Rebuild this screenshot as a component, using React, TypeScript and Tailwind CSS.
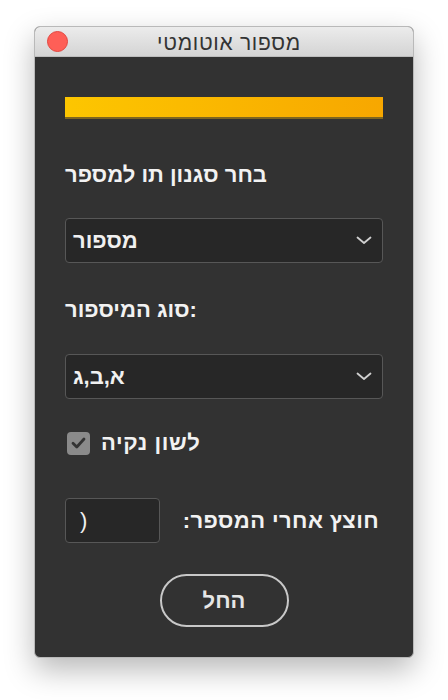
import React from "react";

const font = { fontFamily: '"Liberation Sans", Arial, sans-serif' };

function Chevron() {
  return (
    <svg width="16" height="9" viewBox="0 0 16 9" className="shrink-0">
      <path d="M1.5 1.5 L8 7 L14.5 1.5" fill="none" stroke="#d0d0d0" strokeWidth="1.8" strokeLinecap="round" strokeLinejoin="round" />
    </svg>
  );
}

function Select({ value }: { value: string }) {
  return (
    <div className="flex h-[45px] w-full items-center justify-between rounded-[4px] border border-[#575757] bg-[#272727] pl-[7px] pr-[10px]">
      <span className="text-[22px] font-semibold leading-[26px] text-[#f0f0f0]">{value}</span>
      <Chevron />
    </div>
  );
}

export default function App() {
  return (
    <div className="min-h-[700px] w-[448px] bg-white pl-[34px] pt-[26px]" style={font}>
      <div className="flex h-[632px] w-[380px] flex-col overflow-hidden rounded-[6px] border border-[#b9b9b9] bg-[#323232] shadow-[0_12px_30px_rgba(0,0,0,0.28)]">
        <div className="relative flex h-[30px] shrink-0 items-center justify-center border-b border-[#bdbdbd] bg-gradient-to-b from-[#ececec] to-[#d4d4d4] pl-[10px] pt-[2px]">
          <div className="absolute left-[12px] top-[4px] h-[21px] w-[21px] rounded-full border border-[#e2463f] bg-[#fe5f57]" />
          <span className="text-[21px] leading-[24px] tracking-[0.7px] text-[#333333]">מספור אוטומטי</span>
        </div>
        <div className="flex flex-col px-[30px]">
          <div className="mt-[40px] h-[22px] border-b-2 border-[#7d6520] bg-gradient-to-r from-[#fdc600] to-[#f7a700]" />
          <div className="mt-[43px] text-[22px] font-semibold leading-[26px] text-[#f2f2f2]">בחר סגנון תו למספר</div>
          <div className="mt-[30px]">
            <Select value="מספור" />
          </div>
          <div className="mt-[34px] text-[22px] font-semibold leading-[26px] text-[#f2f2f2]">סוג המיספור:</div>
          <div className="mt-[31px]">
            <Select value="א,ב,ג" />
          </div>
          <div className="mt-[31px] flex items-center gap-[11px] pl-[2px]">
            <div className="flex h-[23px] w-[23px] items-center justify-center rounded-[4px] bg-[#8a8a8a]">
              <svg width="15" height="12" viewBox="0 0 15 12">
                <path d="M2 6.2 L5.8 10 L13 2" fill="none" stroke="#333333" strokeWidth="2.8" strokeLinecap="round" strokeLinejoin="round" />
              </svg>
            </div>
            <span className="tracking-[0.6px] text-[22px] font-semibold leading-[26px] text-[#f2f2f2]">לשון נקיה</span>
          </div>
          <div dir="rtl" className="mt-[42px] flex items-center justify-between">
            <span className="pr-[4px] text-[22px] font-semibold leading-[26px] tracking-[0.4px] text-[#f2f2f2]">חוצץ אחרי המספר:</span>
            <div dir="ltr" className="flex h-[45px] w-[95px] items-center rounded-[4px] border border-[#575757] bg-[#272727] pl-[14px]">
              <span className="text-[22px] leading-[26px] text-[#f0f0f0]">)</span>
            </div>
          </div>
          <div className="mt-[31px] flex justify-center">
            <div className="flex h-[53px] w-[129px] items-center justify-center rounded-full border-2 border-[#c8c8c8]">
              <span className="text-[22px] font-semibold leading-[26px] text-[#e6e6e6]">החל</span>
            </div>
          </div>
        </div>
      </div>
    </div>
  );
}
